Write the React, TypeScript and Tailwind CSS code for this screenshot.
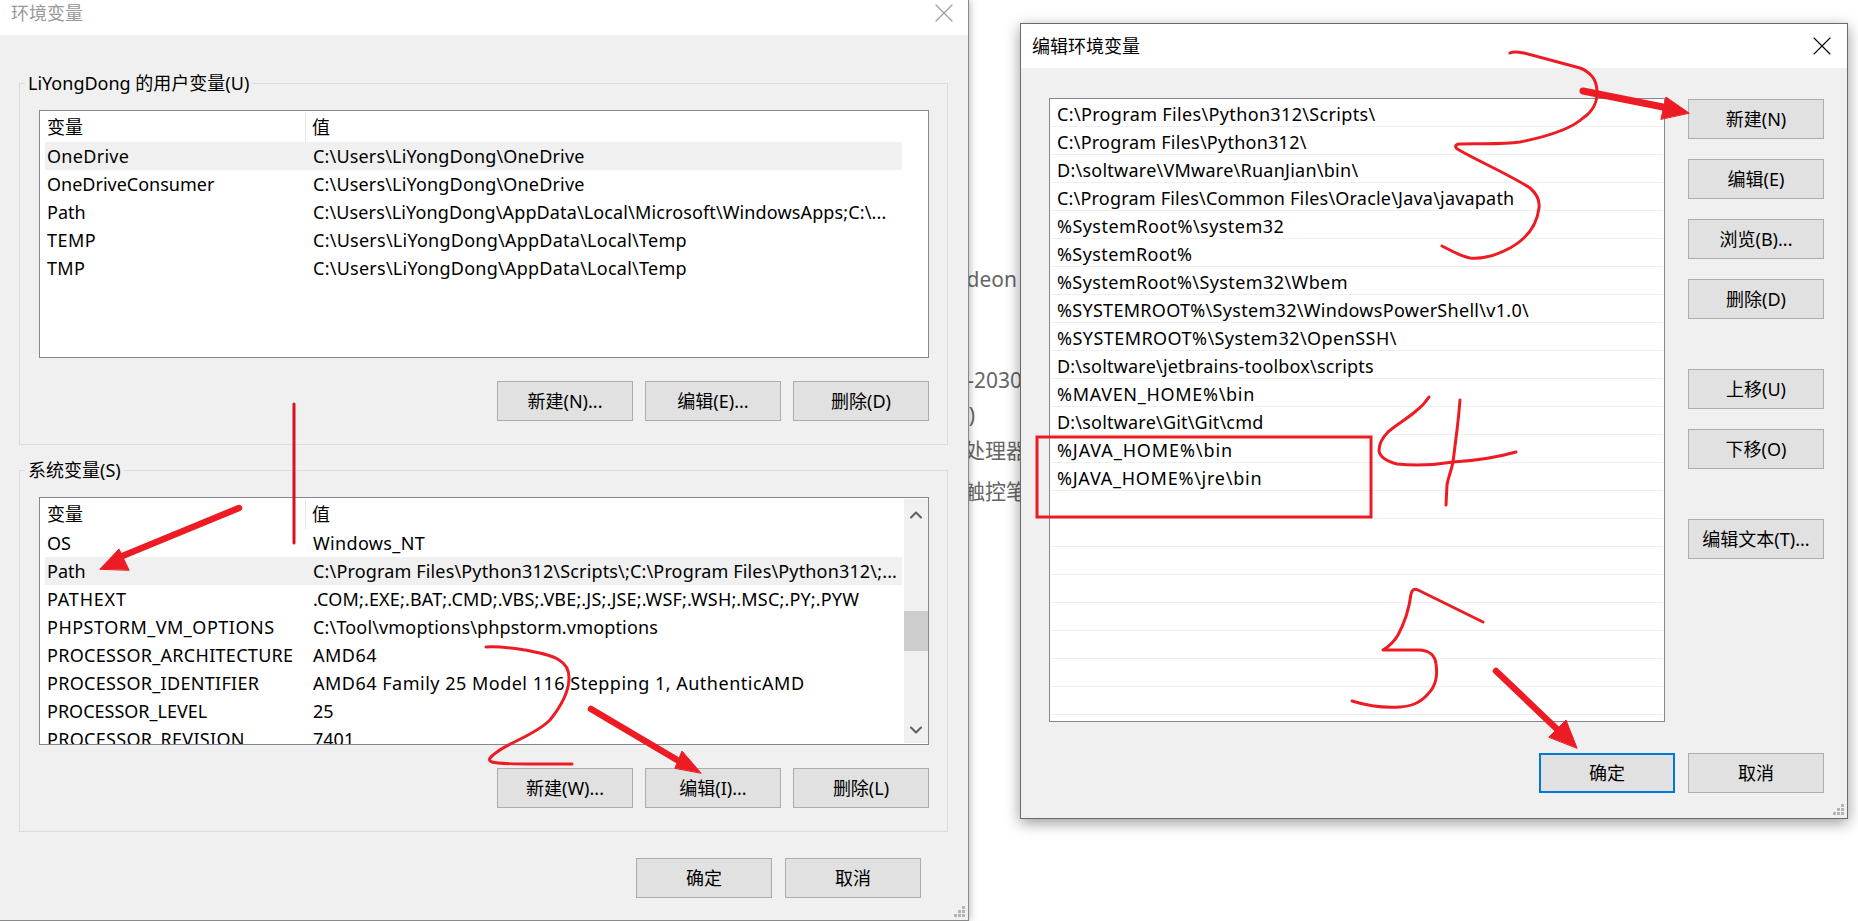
import React from 'react';
import { X, ChevronUp, ChevronDown } from 'lucide-react';

const userVars = [
  ['OneDrive', 'C:\\Users\\LiYongDong\\OneDrive', 'tracking-[0.3px]', 'tracking-[0.17px]'],
  ['OneDriveConsumer', 'C:\\Users\\LiYongDong\\OneDrive', '', 'tracking-[0.17px]'],
  ['Path', 'C:\\Users\\LiYongDong\\AppData\\Local\\Microsoft\\WindowsApps;C:\\...', '', 'tracking-[0.13px]'],
  ['TEMP', 'C:\\Users\\LiYongDong\\AppData\\Local\\Temp', 'tracking-[0.5px]', 'tracking-[0.25px]'],
  ['TMP', 'C:\\Users\\LiYongDong\\AppData\\Local\\Temp', 'tracking-[0.3px]', 'tracking-[0.25px]'],
];

const systemVars = [
  ['OS', 'Windows_NT', '', 'tracking-[0.35px]'],
  ['Path', 'C:\\Program Files\\Python312\\Scripts\\;C:\\Program Files\\Python312\\;...', '', 'tracking-[0.16px]'],
  ['PATHEXT', '.COM;.EXE;.BAT;.CMD;.VBS;.VBE;.JS;.JSE;.WSF;.WSH;.MSC;.PY;.PYW', 'tracking-[0.8px]', 'tracking-[0.16px]'],
  ['PHPSTORM_VM_OPTIONS', 'C:\\Tool\\vmoptions\\phpstorm.vmoptions', 'tracking-[0.5px]', 'tracking-[0.16px]'],
  ['PROCESSOR_ARCHITECTURE', 'AMD64', 'tracking-[0.3px]', 'tracking-[0.5px]'],
  ['PROCESSOR_IDENTIFIER', 'AMD64 Family 25 Model 116 Stepping 1, AuthenticAMD', 'tracking-[0.3px]', 'tracking-[0.5px]'],
  ['PROCESSOR_LEVEL', '25', '', ''],
  ['PROCESSOR_REVISION', '7401', 'tracking-[0.3px]', ''],
];

const pathItems = [
  ['C:\\Program Files\\Python312\\Scripts\\', 'tracking-[0.35px]'],
  ['C:\\Program Files\\Python312\\', 'tracking-[0.25px]'],
  ['D:\\soltware\\VMware\\RuanJian\\bin\\', 'tracking-[0.25px]'],
  ['C:\\Program Files\\Common Files\\Oracle\\Java\\javapath', 'tracking-[0.2px]'],
  ['%SystemRoot%\\system32', 'tracking-[0.45px]'],
  ['%SystemRoot%', 'tracking-[0.4px]'],
  ['%SystemRoot%\\System32\\Wbem', 'tracking-[0.4px]'],
  ['%SYSTEMROOT%\\System32\\WindowsPowerShell\\v1.0\\', 'tracking-[0.3px]'],
  ['%SYSTEMROOT%\\System32\\OpenSSH\\', 'tracking-[0.45px]'],
  ['D:\\soltware\\jetbrains-toolbox\\scripts', 'tracking-[0.2px]'],
  ['%MAVEN_HOME%\\bin', 'tracking-[0.7px]'],
  ['D:\\soltware\\Git\\Git\\cmd', 'tracking-[0.2px]'],
  ['%JAVA_HOME%\\bin', 'tracking-[0.9px]'],
  ['%JAVA_HOME%\\jre\\bin', 'tracking-[0.75px]'],
  ['', ''], ['', ''], ['', ''], ['', ''], ['', ''], ['', ''], ['', ''], ['', ''],
];

function Btn({ label, primary, className = '' }: any) {
  return (
    <button
      className={`h-10 w-[136px] shrink-0 flex items-center justify-center bg-[#e1e1e1] text-black ${
        primary ? 'border-2 border-[#0078d7]' : 'border border-[#adadad]'
      } ${className}`}
    >
      {label}
    </button>
  );
}

function VarTable({ rows, scroll }: any) {
  return (
    <div className="relative h-[248px] w-[890px] border border-[#828790] bg-white flex overflow-hidden">
      <div className="w-[862px] shrink-0 pl-[5px]">
        <div className="flex h-[31px] items-center pt-[2px]">
          <div className="w-[261px] h-full flex items-center pl-[2px] border-r border-[#e5e5e5]">变量</div>
          <div className="pl-[6px]">值</div>
        </div>
        {rows.map(([name, value, nameTrack, valueTrack]: string[]) => (
          <div key={name} className={`flex h-7 items-center whitespace-nowrap ${name === 'Path' && scroll ? 'bg-[#f0f0f0]' : ''} ${name === 'OneDrive' ? 'bg-[#f0f0f0]' : ''}`}>
            <div className={`w-[261px] shrink-0 pl-[2px] ${nameTrack}`}>{name}</div>
            <div className={`pl-[7px] ${valueTrack}`}>{value}</div>
          </div>
        ))}
      </div>
      {scroll && (
        <div className="ml-[2px] w-6 my-px flex flex-col items-center justify-between bg-[#f0f0f0] relative">
          <ChevronUp size={20} strokeWidth={2.5} className="mt-[6px] text-[#606060]" />
          <div className="absolute left-0 right-0 top-[112px] h-10 bg-[#cdcdcd]" />
          <ChevronDown size={20} strokeWidth={2.5} className="mb-[3px] text-[#606060]" />
        </div>
      )}
    </div>
  );
}

function Group({ title, rows, scroll, labels, className = '' }: any) {
  return (
    <fieldset className={`ml-[19px] w-[929px] border border-[#dcdcdc] pl-[19px] pr-[18px] pb-[23px] ${className}`}>
      <legend className="ml-[-14px] px-[3px] h-6 leading-6 bg-[#f0f0f0]">{title}</legend>
      <div className="pt-[15px]">
        <VarTable rows={rows} scroll={scroll} />
      </div>
      <div className="mt-[23px] flex justify-end gap-[12px]">
        {labels.map((l: string) => <Btn key={l} label={l} />)}
      </div>
    </fieldset>
  );
}

function Grip({ className = '' }: any) {
  return (
    <svg width="12" height="12" viewBox="0 0 12 12" className={`absolute ${className}`} fill="#b5b5b5">
      <rect x="8" y="0" width="3" height="3" />
      <rect x="4" y="4" width="3" height="3" />
      <rect x="8" y="4" width="3" height="3" />
      <rect x="0" y="8" width="3" height="3" />
      <rect x="4" y="8" width="3" height="3" />
      <rect x="8" y="8" width="3" height="3" />
    </svg>
  );
}

function Annotations() {
  const red = '#ed1c24';
  return (
    <svg width="1858" height="921" viewBox="0 0 1858 921" className="absolute left-0 top-0 pointer-events-none" fill="none" stroke={red} strokeLinecap="round" strokeLinejoin="round">
      {/* vertical stroke */}
      <path d="M294 404 L294 543" strokeWidth="3" stroke="#d8121c" />
      {/* arrow to Path */}
      <path d="M239 508 L120 557" strokeWidth="6.5" />
      <path d="M100 569 L119 549 L129 570 Z" fill={red} strokeWidth="1" />
      {/* 2 */}
      <path d="M486 647 C500 646 512 648 525 650 C540 653 552 655 559 660 C566 664 569 670 569 678 C569 690 562 705 550 720 C535 735 510 742 497 752 C490 757 487 760 492 762 C500 765 540 764 572 764" strokeWidth="3" />
      {/* arrow to edit */}
      <path d="M591 709 L684 764" strokeWidth="6.5" />
      <path d="M701 773 L682 751 L675 768 Z" fill={red} strokeWidth="1" />
      {/* 3 */}
      <path d="M1510 53 C1514 51 1518 52 1524 53 L1580 68 C1590 72 1596 78 1597 90 C1598 102 1592 112 1583 118 C1570 130 1545 137 1520 142 C1500 145 1475 143 1459 144 C1454 145 1455 148 1459 150 C1480 162 1510 175 1530 188 C1537 194 1540 200 1539 208 C1537 225 1528 238 1510 248 C1495 256 1480 259 1470 258 C1460 256 1450 250 1442 246" strokeWidth="3" />
      {/* arrow to new */}
      <path d="M1583 91 L1668 108" strokeWidth="7" />
      <path d="M1689 113 L1666 97 L1661 119 Z" fill={red} strokeWidth="1" />
      {/* box */}
      <rect x="1037" y="437" width="334" height="80" strokeWidth="3" strokeLinecap="butt" strokeLinejoin="miter" />
      {/* 4 */}
      <path d="M1429 397 C1425 403 1420 408 1416 411 C1408 418 1396 425 1388 432 C1382 438 1379 445 1379 451 C1380 457 1386 461 1397 464 C1415 466 1435 465 1453 462 C1470 461 1495 458 1516 452" strokeWidth="3" />
      <path d="M1460 400 C1459 412 1458 422 1457 430 L1453 462 C1451 472 1448 478 1447 485 L1446 505" strokeWidth="3" />
      {/* 5 */}
      <path d="M1483 622 L1418 590 C1414 588 1412 590 1411 594 C1409 610 1405 622 1398 635 C1394 642 1388 647 1383 650 L1420 650 C1430 651 1435 655 1436 664 C1438 677 1435 687 1428 694 C1420 703 1412 706 1400 707 C1385 708 1368 706 1352 701" strokeWidth="3" />
      {/* arrow to ok */}
      <path d="M1496 671 L1560 732" strokeWidth="6.5" />
      <path d="M1577 748 L1566 720 L1549 737 Z" fill={red} strokeWidth="1" />
    </svg>
  );
}

export default function App() {
  return (
    <div
      className="relative h-[921px] w-[1858px] overflow-hidden bg-white text-[18px] text-black"
      style={{ fontFamily: '"Noto Sans", "Noto Sans CJK SC", sans-serif' }}
    >
      {/* page behind the dialogs */}
      <div className="absolute left-[900px] top-[264px] w-[135px] text-[21px] text-[#666] whitespace-nowrap flex flex-col items-end">
        <div className="h-[101px] pr-[18px]">Radeon</div>
        <div className="h-[35px] pr-[13px]">2025-2030</div>
        <div className="h-[35px] pr-[60px]">)</div>
        <div className="h-[41px] pr-[8px]">中央处理器</div>
        <div className="pr-[8px]">支持触控笔</div>
      </div>

      {/* 环境变量 */}
      <div className="absolute left-0 top-0 h-[921px] w-[969px] bg-[#f0f0f0] border-r border-b border-[#8a8a8a] shadow-[0_0_8px_rgba(0,0,0,0.35)]">
        <div className="h-[35px] bg-white flex items-center justify-between pl-[11px] pr-[8px] text-[#999] pb-[9px]">
          <span>环境变量</span>
          <X size={32} strokeWidth={0.8} className="text-[#999]" />
        </div>
        <Group
          className="mt-[36px]"
          title="LiYongDong 的用户变量(U)"
          rows={userVars}
          labels={['新建(N)...', '编辑(E)...', '删除(D)']}
        />
        <Group
          className="mt-[13px]"
          title="系统变量(S)"
          rows={systemVars}
          scroll
          labels={['新建(W)...', '编辑(I)...', '删除(L)']}
        />
        <div className="mt-[26px] pr-[47px] flex justify-end gap-[13px]">
          <Btn label="确定" />
          <Btn label="取消" />
        </div>
        <Grip className="right-[2px] bottom-[2px]" />
      </div>

      {/* 编辑环境变量 */}
      <div className="absolute left-[1020px] top-[23px] h-[796px] w-[828px] bg-[#f0f0f0] border border-[#6b6b6b] shadow-[0_4px_14px_rgba(0,0,0,0.4)]">
        <div className="h-[44px] bg-white flex items-center justify-between pl-[11px] pr-[9px]">
          <span>编辑环境变量</span>
          <X size={32} strokeWidth={0.8} />
        </div>
        <div className="pl-[28px] pt-[30px] pr-[23px] flex gap-[23px]">
          <div className="h-[624px] w-[616px] shrink-0 border border-[#828790] bg-white overflow-hidden">
            {pathItems.map(([p, track], i) => (
              <div key={i} className={`h-7 mx-[1px] pl-[6px] pt-[4px] flex items-center border-b border-[#f0f0f0] whitespace-nowrap ${track}`}>{p}</div>
            ))}
          </div>
          <div className="flex flex-col pt-px">
            <Btn label="新建(N)" />
            <Btn label="编辑(E)" className="mt-5" />
            <Btn label="浏览(B)..." className="mt-5" />
            <Btn label="删除(D)" className="mt-5" />
            <Btn label="上移(U)" className="mt-[50px]" />
            <Btn label="下移(O)" className="mt-5" />
            <Btn label="编辑文本(T)..." className="mt-[50px]" />
          </div>
        </div>
        <div className="mt-[31px] pr-[23px] flex justify-end gap-[13px]">
          <Btn label="确定" primary />
          <Btn label="取消" />
        </div>
        <Grip className="right-[2px] bottom-[2px]" />
      </div>

      <Annotations />
    </div>
  );
}
